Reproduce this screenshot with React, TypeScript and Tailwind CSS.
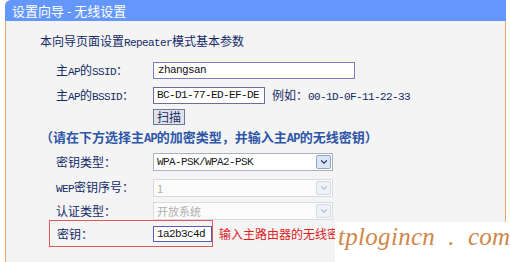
import { ChevronDown } from "lucide-react";

const cjk = "font-['Noto_Sans_CJK_SC',sans-serif]";
const mono = "font-['Liberation_Mono','Noto_Sans_CJK_SC',monospace] text-[11px] tracking-[-0.6px]";

function L({ children }: { children: string }) {
  return <span className={mono}>{children}</span>;
}

function Select({ value, disabled }: { value: string; disabled?: boolean }) {
  return (
    <div
      className={`flex items-center justify-between w-[180px] h-[18px] border pl-[3px] pr-[1px] ${
        disabled ? "bg-[#fbfbfb] border-[#d8dce2]" : "bg-white border-[#a9b3c0]"
      }`}
    >
      <span className={disabled ? `${cjk} text-[11px] text-[#b0b0b0]` : `${mono} text-[#1a1a1a]`}>{value}</span>
      <div
        className={`flex items-center justify-center w-[15px] h-[14px] border rounded-[2px] ${
          disabled ? "bg-[#eef2f8] border-[#d3dbe6] text-[#b8c2d0]" : "bg-[#dbe5f4] border-[#8fa6c8] text-[#34496e]"
        }`}
      >
        <ChevronDown size={10} strokeWidth={3} />
      </div>
    </div>
  );
}

export default function App() {
  return (
    <div className={`relative w-[510px] h-[262px] overflow-hidden bg-white flex ${cjk}`}>
      <div className="ml-[5px] w-[501px] h-full flex flex-col bg-[#f4f4f4] border-x border-[#e6a56c] rounded-tl-[6px]">
        <div className="-mx-px h-[21px] bg-[#6497fc] rounded-tl-[6px] pl-[7px] text-[13px] leading-[21px] text-white">
          设置向导 - 无线设置
        </div>

        <div className="pl-[34px] text-[12px] text-[#132a66]">
          <div className="mt-[13px] h-[14px] leading-[14px]">
            本向导页面设置<L>Repeater</L>模式基本参数
          </div>

          <div className="pl-[16px]">
            <div className="mt-[14px] h-[17px] flex items-center">
              <div className="w-[97px]">主<L>AP</L>的<L>SSID</L>：</div>
              <div className={`w-[202px] h-[17px] bg-white border border-[#7c7cbd] pl-[4px] leading-[15px] text-[#111] ${mono}`}>
                zhangsan
              </div>
            </div>

            <div className="mt-[8px] h-[17px] flex items-center">
              <div className="w-[97px]">主<L>AP</L>的<L>BSSID</L>：</div>
              <div className={`w-[112px] h-[17px] bg-white border border-[#6d6d9a] pl-[3px] leading-[15px] text-[#111] ${mono}`}>
                BC-D1-77-ED-EF-DE
              </div>
              <div className="ml-[7px]">
                例如：<L>00-1D-0F-11-22-33</L>
              </div>
            </div>

            <div className="mt-[5px] h-[16px] flex items-center">
              <div className="w-[97px]" />
              <div className="h-[16px] px-[3px] bg-[#dde4f0] border border-[#6f7a92] text-[12px] leading-[14px] text-[#1d2c5a]">
                扫描
              </div>
            </div>
          </div>

          <div className="mt-[4px] h-[16px] text-[13px] leading-[16px] font-bold text-[#2d55a8]">
            （请在下方选择主<span className="font-['Liberation_Mono',monospace] text-[12px] tracking-[-0.8px]">AP</span>的加密类型，并输入主<span className="font-['Liberation_Mono',monospace] text-[12px] tracking-[-0.8px]">AP</span>的无线密钥）
          </div>

          <div className="pl-[16px]">
            <div className="mt-[8px] h-[18px] flex items-center">
              <div className="w-[97px]">密钥类型：</div>
              <Select value="WPA-PSK/WPA2-PSK" />
            </div>

            <div className="mt-[8px] h-[18px] flex items-center">
              <div className="w-[97px]"><L>WEP</L>密钥序号：</div>
              <Select value="1" disabled />
            </div>

            <div className="mt-[5px] h-[18px] flex items-center">
              <div className="w-[97px]">认证类型：</div>
              <Select value="开放系统" disabled />
            </div>
          </div>

          <div className="h-[27px] flex items-center">
            <div className="ml-[9px] w-[164px] h-[27px] flex items-center border border-[#de5a5a] pl-[7px]">
              <div className="w-[96px]">密钥：</div>
              <div className={`w-[59px] h-[16px] bg-white border border-[#5a5ab0] pl-[3px] leading-[14px] text-[#111] ${mono}`}>
                1a2b3c4d
              </div>
            </div>
            <div className="ml-[6px] whitespace-nowrap text-[#e0201c]">输入主路由器的无线密钥</div>
          </div>
        </div>
      </div>

      <div className="absolute left-[335px] top-[222px] w-[175px] h-[40px] bg-white pl-[3px]">
        <span className="font-['Liberation_Serif',serif] italic text-[25px] leading-[30px] tracking-[0.3px] text-[#cf8748] whitespace-pre">
          tplogincn  .  com
        </span>
      </div>
    </div>
  );
}
